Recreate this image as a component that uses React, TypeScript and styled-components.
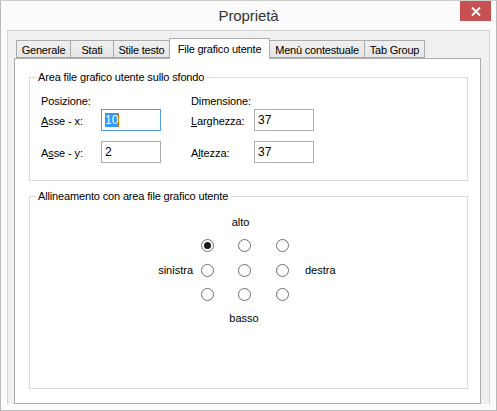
import styled, { createGlobalStyle } from "styled-components";

const GlobalStyle = createGlobalStyle`
  html, body {
    margin: 0;
    padding: 0;
    background: #fbfbfb;
  }
  body {
    font-family: "Liberation Sans", Arial, sans-serif;
    font-size: 11px;
    color: #000;
  }
`;

const tabs = [
  { label: "Generale", width: 55 },
  { label: "Stati", width: 44 },
  { label: "Stile testo", width: 57 },
  { label: "File grafico utente", width: 101 },
  { label: "Menù contestuale", width: 96 },
  { label: "Tab Group", width: 61 },
];
const activeTab = 3;

const Window = styled.div`
  width: 497px;
  height: 411px;
  box-sizing: border-box;
  border: 1px solid #b9b9b9;
  border-top-color: #cfcfcf;
  background: #fbfbfb;
  display: flex;
  flex-direction: column;
`;

const TitleBar = styled.div`
  height: 29px;
  display: grid;
  grid-template-columns: 1fr auto 1fr;
  align-items: start;
`;

const Title = styled.div`
  grid-column: 2;
  font-size: 15px;
  color: #333;
  padding-top: 6px;
  letter-spacing: -0.1px;
`;

const CloseButton = styled.div`
  grid-column: 3;
  justify-self: end;
  width: 31px;
  height: 20px;
  margin-right: 5px;
  background: #c75050;
  display: flex;
  align-items: center;
  justify-content: center;
`;

const Frame = styled.div`
  margin: 0 6px 0 6px;
  height: 374px;
  box-sizing: border-box;
  border: 1px solid #d4d4d4;
  border-bottom: none;
  background: #f0f0f0;
  padding: 7px 8px 0 6px;
  display: flex;
  flex-direction: column;
`;

const TabStrip = styled.div`
  display: flex;
  align-items: flex-end;
  height: 20px;
  padding-left: 2px;
  position: relative;
  z-index: 1;
`;

const Tab = styled.div<{ $active?: boolean; $width: number }>`
  box-sizing: border-box;
  width: ${(p) => p.$width}px;
  height: ${(p) => (p.$active ? "21px" : "18px")};
  margin-left: -1px;
  padding-top: ${(p) => (p.$active ? "3px" : "2px")};
  text-align: center;
  border: 1px solid #acacac;
  border-bottom: ${(p) => (p.$active ? "none" : "1px solid #acacac")};
  background: ${(p) => (p.$active ? "#fff" : "linear-gradient(#f0f0f0, #e5e5e5)")};
  margin-bottom: ${(p) => (p.$active ? "-1px" : "0")};
  white-space: nowrap;
  font-size: 11px;
  line-height: 14px;
  letter-spacing: -0.2px;
  &:first-child {
    margin-left: 0;
  }
`;

const Panel = styled.div`
  flex: 1;
  background: #fff;
  border: 1px solid #acacac;
  padding: 12px 12px 0 14px;
  display: flex;
  flex-direction: column;
  gap: 9px;
`;

const Group = styled.fieldset<{ $height: number }>`
  margin: 0;
  height: ${(p) => p.$height}px;
  box-sizing: border-box;
  border: 1px solid #dcdcdc;
  padding: 0 0 0 11px;
  legend {
    margin-left: -4px;
    padding: 0 2px 0 1px;
    line-height: 13px;
    letter-spacing: -0.15px;
  }
`;

const FieldGrid = styled.div`
  display: grid;
  grid-template-columns: 60px 60px 30px 63px 60px;
  grid-template-rows: 16px 22px 32px;
  align-items: end;
  padding-top: 9px;
`;

const Heading = styled.span<{ $col: string }>`
  grid-column: ${(p) => p.$col};
  align-self: center;
  letter-spacing: -0.1px;
`;

const Label = styled.span`
  letter-spacing: -0.1px;
  padding-bottom: 4px;
  u {
    text-decoration-thickness: 1px;
    text-underline-offset: 1px;
  }
`;

const Spacer = styled.span``;

const Input = styled.div<{ $focused?: boolean }>`
  box-sizing: border-box;
  height: 22px;
  width: 60px;
  border: 1px solid ${(p) => (p.$focused ? "#569de5" : "#abadb3")};
  padding: 3px 3px;
  font-size: 12px;
  line-height: 14px;
  display: flex;
  align-items: center;
`;

const Selected = styled.span`
  background: #3399ff;
  color: #fff;
  border-right: 1px solid #d96c00;
`;

const RadioGrid = styled.div`
  display: grid;
  grid-template-columns: 40px 28px 46px 30px 50px;
  grid-template-rows: 22px 25px 24px 24px 24px;
  align-items: center;
  justify-items: center;
  margin: 8px 0 0 112px;
  width: max-content;
`;

const EdgeLabel = styled.span<{ $col: string; $align?: string; $shift?: number }>`
  grid-column: ${(p) => p.$col};
  justify-self: ${(p) => p.$align || "center"};
  padding-left: ${(p) => (p.$shift && p.$shift > 0 ? p.$shift : 0)}px;
  padding-right: ${(p) => (p.$shift && p.$shift < 0 ? -p.$shift : 0)}px;
`;

const Radio = styled.span<{ $checked?: boolean }>`
  box-sizing: border-box;
  width: 13px;
  height: 13px;
  border-radius: 50%;
  border: 1px solid #6f6f6f;
  background: #fff;
  display: flex;
  align-items: center;
  justify-content: center;
  &::after {
    content: "";
    width: 7px;
    height: 7px;
    border-radius: 50%;
    background: ${(p) => (p.$checked ? "#1a1a1a" : "transparent")};
  }
`;

const CloseIcon = () => (
  <svg width="10" height="9" viewBox="0 0 10 9">
    <path d="M1 0.5 L9 8.5 M9 0.5 L1 8.5" stroke="#fff" strokeWidth="2" />
  </svg>
);

export default function App() {
  return (
    <>
      <GlobalStyle />
      <Window>
        <TitleBar>
          <Title>Proprietà</Title>
          <CloseButton>
            <CloseIcon />
          </CloseButton>
        </TitleBar>
        <Frame>
          <TabStrip>
            {tabs.map((t, i) => (
              <Tab key={t.label} $width={t.width} $active={i === activeTab}>
                {t.label}
              </Tab>
            ))}
          </TabStrip>
          <Panel>
            <Group $height={110}>
              <legend>Area file grafico utente sullo sfondo</legend>
              <FieldGrid>
                <Heading $col="1 / 3">Posizione:</Heading>
                <Heading $col="4 / 6">Dimensione:</Heading>
                <Label>
                  <u>A</u>sse - x:
                </Label>
                <Input $focused>
                  <Selected>10</Selected>
                </Input>
                <Spacer />
                <Label>
                  <u>L</u>arghezza:
                </Label>
                <Input>37</Input>
                <Label>
                  A<u>s</u>se - y:
                </Label>
                <Input>2</Input>
                <Spacer />
                <Label>
                  A<u>l</u>tezza:
                </Label>
                <Input>37</Input>
              </FieldGrid>
            </Group>
            <Group $height={199}>
              <legend>Allineamento con area file grafico utente</legend>
              <RadioGrid>
                <EdgeLabel $col="3" $shift={-7}>
                  alto
                </EdgeLabel>
                <Spacer style={{ gridColumn: "1" }} />
                <Radio $checked />
                <Radio />
                <Radio />
                <Spacer />
                <EdgeLabel $col="1" $align="end">
                  sinistra
                </EdgeLabel>
                <Radio />
                <Radio />
                <Radio />
                <EdgeLabel $col="5" $align="start" $shift={8}>
                  destra
                </EdgeLabel>
                <Spacer />
                <Radio />
                <Radio />
                <Radio />
                <Spacer />
                <EdgeLabel $col="3">basso</EdgeLabel>
              </RadioGrid>
            </Group>
          </Panel>
        </Frame>
      </Window>
    </>
  );
}
